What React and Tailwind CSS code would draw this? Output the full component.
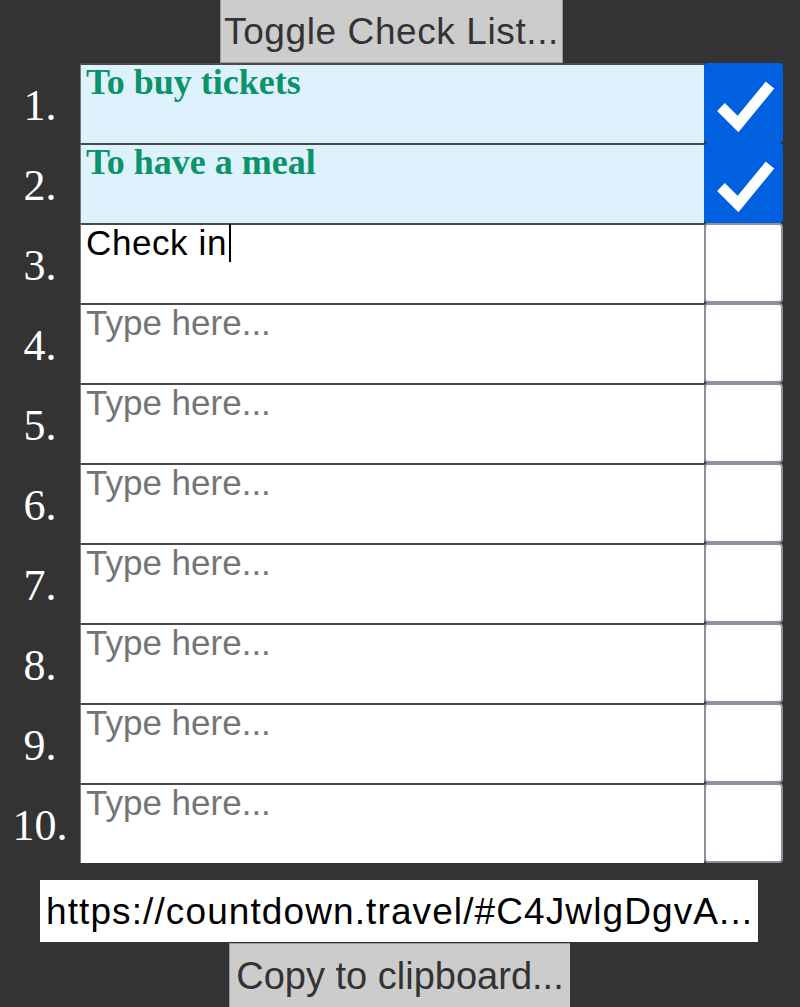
import React from "react";

const items = [
  { text: "To buy tickets", checked: true },
  { text: "To have a meal", checked: true },
  { text: "Check in", checked: false, typing: true },
  { text: "", checked: false },
  { text: "", checked: false },
  { text: "", checked: false },
  { text: "", checked: false },
  { text: "", checked: false },
  { text: "", checked: false },
  { text: "", checked: false },
];

function Check() {
  return (
    <svg width="79" height="80" viewBox="0 0 79 80" className="block">
      <polyline
        points="17,44 34,61 66,22"
        fill="none"
        stroke="#fff"
        strokeWidth="11"
        strokeLinecap="butt"
        strokeLinejoin="miter"
      />
    </svg>
  );
}

function Row({ idx, item }) {
  return (
    <div className="flex h-[80px]">
      <div className="w-[80px] flex items-center justify-center text-white text-[44px] leading-none pt-[6px] font-['Liberation_Serif',serif]">
        {idx + 1}.
      </div>
      <div
        className={
          "w-[624px] border-t-2 border-l border-t-[#4a4a4a] border-l-[#777] pl-[5px] " +
          (item.checked ? "bg-[#ddf2fd]" : "bg-white")
        }
      >
        {item.checked ? (
          <div className="font-['Liberation_Serif',serif] font-bold text-[36px] leading-none text-[#0a9468] -mt-[1px]">
            {item.text}
          </div>
        ) : item.text ? (
          <div className="font-['Liberation_Sans',sans-serif] text-[35px] tracking-[0.6px] leading-none text-black flex items-start">
            <span>{item.text}</span>
            <span className="inline-block w-[2px] h-[38px] bg-black ml-[2px] -mt-[1px]"></span>
          </div>
        ) : (
          <div className="font-['Liberation_Sans',sans-serif] text-[35px] leading-none text-[#757575]">
            Type here...
          </div>
        )}
      </div>
      <div
        className={
          "w-[79px] h-[80px] rounded-[4px] border-2 " +
          (item.checked
            ? "bg-[#0060df] border-[#0060df]"
            : "bg-white border-[#8f8f9d]")
        }
      >
        {item.checked && (
          <div className="-m-[2px]">
            <Check />
          </div>
        )}
      </div>
    </div>
  );
}

export default function App() {
  return (
    <div className="w-[800px] h-[1007px] bg-[#333333] overflow-hidden flex flex-col">
      <div className="ml-[220px] w-[343px] h-[63px] bg-[#cccccc] border border-[#999] border-t-0 flex items-center justify-center text-[#333] text-[37px] tracking-[0.6px] font-['Liberation_Sans',sans-serif] leading-none whitespace-nowrap">
        Toggle Check List...
      </div>
      <div className="flex flex-col">
        {items.map((it, i) => (
          <Row key={i} idx={i} item={it} />
        ))}
      </div>
      <div className="ml-[40px] mt-[17px] w-[718px] h-[62px] bg-white flex items-center pl-[6px] text-black text-[37px] tracking-[1.1px] font-['Liberation_Sans',sans-serif] leading-none whitespace-nowrap overflow-hidden">
        https://countdown.travel/#C4JwlgDgvA...
      </div>
      <div className="ml-[229px] mt-[1px] w-[341px] h-[64px] bg-[#cccccc] border-t border-l border-[#999] flex items-center justify-center text-[#333] text-[38px] font-['Liberation_Sans',sans-serif] leading-none whitespace-nowrap">
        Copy to clipboard...
      </div>
    </div>
  );
}
